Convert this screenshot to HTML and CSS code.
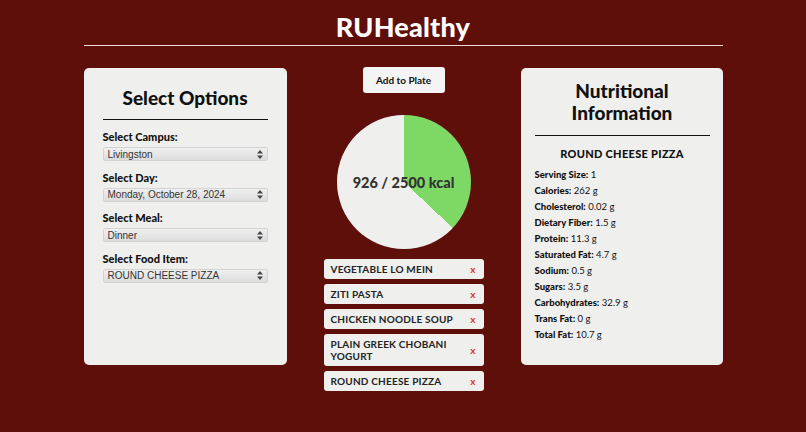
FILE: index.html
```
<!DOCTYPE html>
<html lang="en">
<head>
  <meta charset="UTF-8" />
  <meta name="viewport" content="width=device-width, initial-scale=1.0" />
  <title>RUHealthy</title>
  <link rel="stylesheet" href="styles.css">
</head>
<body>
  <h1 class="title">RUHealthy</h1>
  <hr class="top-rule" />

  <div class="layout">
    <div class="card options">
      <h2>Select Options</h2>
      <hr class="card-rule" />

      <label for="campus">Select Campus:</label>
      <select id="campus">
        <option>Livingston</option>
      </select>

      <label for="day">Select Day:</label>
      <select id="day">
        <option>Monday, October 28, 2024</option>
      </select>

      <label for="meal">Select Meal:</label>
      <select id="meal">
        <option>Dinner</option>
      </select>

      <label for="food">Select Food Item:</label>
      <select id="food">
        <option>ROUND CHEESE PIZZA</option>
      </select>
    </div>

    <div class="plate">
      <button class="add-btn">Add to Plate</button>

      <div class="pie" style="background: conic-gradient(#7ed866 0deg 133.3deg, #eff0ee 133.3deg 360deg);">
        <span>926 / 2500 kcal</span>
      </div>

      <ul class="plate-list">
        <li><span>VEGETABLE LO MEIN</span><button class="remove">x</button></li>
        <li><span>ZITI PASTA</span><button class="remove">x</button></li>
        <li><span>CHICKEN NOODLE SOUP</span><button class="remove">x</button></li>
        <li><span>PLAIN GREEK CHOBANI YOGURT</span><button class="remove">x</button></li>
        <li><span>ROUND CHEESE PIZZA</span><button class="remove">x</button></li>
      </ul>
    </div>

    <div class="card nutrition">
      <h2>Nutritional Information</h2>
      <hr class="card-rule" />
      <h3>ROUND CHEESE PIZZA</h3>
      <p><b>Serving Size:</b> 1</p>
      <p><b>Calories:</b> 262 g</p>
      <p><b>Cholesterol:</b> 0.02 g</p>
      <p><b>Dietary Fiber:</b> 1.5 g</p>
      <p><b>Protein:</b> 11.3 g</p>
      <p><b>Saturated Fat:</b> 4.7 g</p>
      <p><b>Sodium:</b> 0.5 g</p>
      <p><b>Sugars:</b> 3.5 g</p>
      <p><b>Carbohydrates:</b> 32.9 g</p>
      <p><b>Trans Fat:</b> 0 g</p>
      <p><b>Total Fat:</b> 10.7 g</p>
    </div>
  </div>
</body>
</html>
```

FILE: styles.css
```
body {
  font-family: Lato, "Open Sans", sans-serif;
  margin: 0;
  background-color: #5f0f0a;
  color: #111;
}
.title {
  color: #fff;
  text-align: center;
  font-size: 27px;
  font-weight: 900;
  letter-spacing: 0.2px;
  margin: 0;
  padding-top: 11px;
  line-height: 32px;
}
.top-rule {
  width: 639px;
  margin: 2px auto 0;
  border: 0;
  border-top: 1.5px solid #ecd9d7;
}
.layout {
  width: 639px;
  margin: 22px auto 0;
  display: grid;
  grid-template-columns: 203px 1fr 202px;
  align-items: start;
}
.card {
  background-color: #eff0ee;
  border-radius: 5px;
  height: 297px;
  box-sizing: border-box;
}
.card h2 {
  text-align: center;
  font-size: 19px;
  font-weight: 900;
  line-height: 22px;
  margin: 0;
}
.card-rule {
  border: 0;
  border-top: 1.5px solid #111;
  margin: 0;
}
.options {
  padding: 19px 19px 0;
}
.options .card-rule {
  margin-top: 10px;
  margin-bottom: 10px;
}
.options label {
  display: block;
  font-size: 11px;
  font-weight: 900;
  line-height: 14px;
  margin-top: 1px;
}
.options select {
  display: block;
  width: 100%;
  height: 14px;
  margin: 3px 0 9.5px;
  padding: 0 0 0 4px;
  font-family: "Liberation Sans", Arial, sans-serif;
  font-size: 10px;
  color: #333;
  border: 1px solid #d3d3d3;
  border-radius: 2px;
  -webkit-appearance: none;
  appearance: none;
  background: url("data:image/svg+xml;utf8,<svg xmlns='http://www.w3.org/2000/svg' width='6' height='9'><path d='M3 0L6 3.5H0Z M3 9L6 5.5H0Z' fill='%23444'/></svg>") no-repeat right 4px center, linear-gradient(#f0f0f0, #dcdcdc);
}
.plate {
  display: flex;
  flex-direction: column;
  align-items: center;
}
.add-btn {
  font-family: inherit;
  font-size: 10px;
  font-weight: 700;
  color: #111;
  background-color: #f4f4f4;
  border: 0;
  border-radius: 3px;
  width: 82px;
  height: 26px;
  margin-top: -1px;
}
.pie {
  width: 134px;
  height: 134px;
  border-radius: 50%;
  margin-top: 22px;
  display: flex;
  align-items: center;
  justify-content: center;
  font-size: 14.5px;
  font-weight: 900;
  color: #333;
}
.plate-list {
  list-style: none;
  margin: 10px 0 0;
  padding: 0;
  width: 160px;
}
.plate-list li {
  display: flex;
  align-items: center;
  justify-content: space-between;
  background-color: #eff0ee;
  border-radius: 3px;
  padding: 4px 6px 4px 7px;
  margin-bottom: 5px;
  font-size: 10px;
  font-weight: 700;
  line-height: 12px;
  letter-spacing: 0.2px;
  color: #222;
}
.plate-list li span {
  max-width: 125px;
}
.remove {
  background: none;
  border: 0;
  padding: 0 2px;
  font-family: inherit;
  font-size: 10px;
  font-weight: 700;
  color: #d8332a;
}
.nutrition {
  padding: 12px 13px 0 14px;
}
.nutrition .card-rule {
  margin-top: 11px;
}
.nutrition h3 {
  text-align: center;
  font-size: 11px;
  font-weight: 900;
  letter-spacing: 0.3px;
  margin: 11px 0 7px;
}
.nutrition p {
  margin: 0;
  font-size: 9.5px;
  line-height: 16px;
}
.nutrition b {
  font-weight: 900;
}
```
